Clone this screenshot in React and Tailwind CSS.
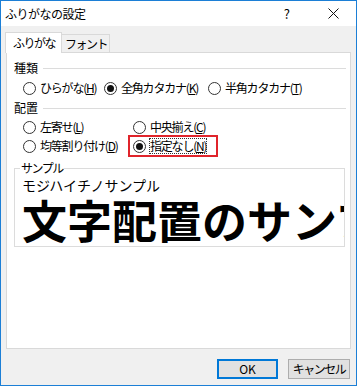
import React from 'react';

const font = { fontFamily: '"Noto Sans CJK JP", "Noto Sans", sans-serif' };

function Radio({ checked }) {
  return (
    <span className="w-[13px] h-[13px] rounded-full border border-[#333] bg-white flex items-center justify-center shrink-0">
      {checked && <span className="w-[7px] h-[7px] rounded-full bg-[#111]" />}
    </span>
  );
}

function Option({ label, k, checked, className = '' }) {
  return (
    <div className={`flex items-center gap-[4px] ${className}`}>
      <Radio checked={checked} />
      <span className="text-[12px] leading-[16px] whitespace-nowrap tracking-[-1.2px]">
        {label}(<u>{k}</u>)
      </span>
    </div>
  );
}

function Group({ title }) {
  return (
    <div className="flex items-center h-[16px]">
      <span className="text-[12px] leading-[16px]">{title}</span>
      <div className="flex-1 h-px bg-[#dcdcdc] ml-[5px]" />
    </div>
  );
}

export default function App() {
  return (
    <div className="w-[357px] h-[386px] border border-[#1c7fd6] bg-[#f0f0f0] flex flex-col text-black overflow-hidden" style={font}>
      {/* Title bar */}
      <div className="h-[25px] bg-white flex items-center shrink-0">
        <span className="pl-[4px] text-[12px] leading-[16px] tracking-[-0.5px]">ふりがなの設定</span>
        <span className="ml-auto text-[13px] leading-[16px] mr-[38px]">?</span>
        <svg width="11" height="11" viewBox="0 0 11 11" className="mr-[17px]">
          <path d="M0.5 0.5 L10.5 10.5 M10.5 0.5 L0.5 10.5" stroke="#111" strokeWidth="1" />
        </svg>
      </div>

      {/* Tabs */}
      <div className="flex items-end h-[20px] mt-[6px] pl-[4px] shrink-0">
        <div className="h-[21px] -mb-px z-10 bg-white border border-b-0 border-[#d9d9d9] pl-[7px] pr-[6px] flex items-center text-[12px] leading-[16px] tracking-[-1.5px]">
          ふりがな
        </div>
        <div className="h-[18px] bg-[#f0f0f0] border border-b-0 border-l-0 border-[#d9d9d9] pl-[3px] pr-[2px] flex items-center text-[12px] leading-[16px] tracking-[-1.5px]">
          フォント
        </div>
      </div>

      {/* Panel */}
      <div className="mx-[5px] h-[297px] bg-white border border-[#d9d9d9] pl-[7px] pr-[4px] pt-[7px] shrink-0">
        <Group title="種類" />
        <div className="flex items-center h-[16px] mt-[4px] pl-[9px]">
          <Option label="ひらがな" k="H" className="w-[81px]" />
          <Option label="全角カタカナ" k="K" checked className="w-[104px]" />
          <Option label="半角カタカナ" k="T" />
        </div>

        <div className="mt-[4px]">
          <Group title="配置" />
        </div>
        <div className="grid grid-cols-[110px_1fr] gap-y-[3px] mt-[3px] pl-[9px]">
          <Option label="左寄せ" k="L" className="h-[16px]" />
          <Option label="中央揃え" k="C" className="h-[16px]" />
          <Option label="均等割り付け" k="D" className="h-[16px]" />
          <div className="relative h-[16px] flex items-center">
            <div className="absolute left-[-5px] top-[-3px] w-[90px] h-[22px] border-2 border-[#e0242b]" />
            <div className="flex items-center gap-[4px]">
              <Radio checked />
              <span className="text-[12px] leading-[14px] whitespace-nowrap tracking-[-1.2px] outline outline-1 outline-dotted outline-[#333]">
                指定なし(<u>N</u>)
              </span>
            </div>
          </div>
        </div>

        {/* Sample group box */}
        <div className="relative mt-[14px] mr-[1px] h-[79px] border border-[#dcdcdc]">
          <span className="absolute left-[5px] top-[-9px] bg-white px-[1px] text-[12px] leading-[16px] tracking-[-1.5px]">サンプル</span>
          <div className="h-full overflow-hidden pl-[7px] pt-[7px]">
            <div className="text-[14px] leading-[18px] whitespace-nowrap">モジハイチノサンプル</div>
            <div className="text-[45px] leading-[42px] font-bold whitespace-nowrap mt-[5px]">文字配置のサンプル</div>
          </div>
        </div>
      </div>

      {/* Buttons */}
      <div className="flex justify-end gap-[10px] mt-[10px] pr-[6px] shrink-0">
        <button className="w-[61px] h-[20px] border-2 border-[#0078d7] bg-[#e1e1e1] text-[12px] leading-[14px]">OK</button>
        <button className="w-[62px] h-[20px] border border-[#adadad] bg-[#e1e1e1] text-[12px] leading-[14px] tracking-[-1.5px]">キャンセル</button>
      </div>
    </div>
  );
}
